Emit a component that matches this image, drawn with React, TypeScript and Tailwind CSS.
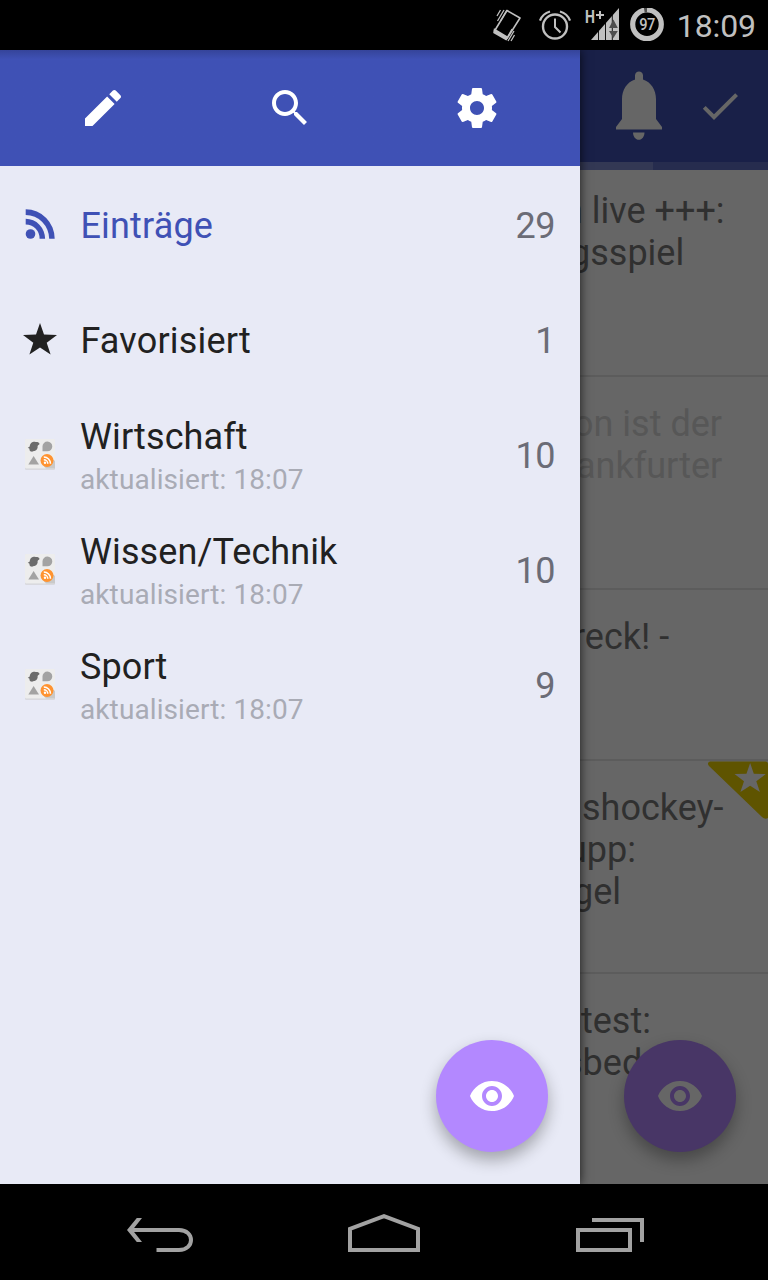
import React from "react";

const EYE =
  "M12 4.5C7 4.5 2.73 7.61 1 12c1.73 4.39 6 7.5 11 7.5s9.27-3.11 11-7.5c-1.73-4.39-6-7.5-11-7.5zM12 17c-2.76 0-5-2.24-5-5s2.24-5 5-5 5 2.24 5 5-2.24 5-5 5zm0-8c-1.66 0-3 1.34-3 3s1.34 3 3 3 3-1.34 3-3-1.34-3-3-3z";
const EDIT =
  "M3 17.25V21h3.75L17.81 9.94l-3.75-3.75L3 17.25zM20.71 7.04c.39-.39.39-1.02 0-1.41l-2.34-2.34c-.39-.39-1.02-.39-1.41 0l-1.83 1.83 3.75 3.75 1.83-1.83z";
const SEARCH =
  "M15.5 14h-.79l-.28-.27C15.41 12.59 16 11.11 16 9.5 16 5.91 13.09 3 9.5 3S3 5.91 3 9.5 5.91 16 9.5 16c1.61 0 3.09-.59 4.23-1.57l.27.28v.79l5 4.99L20.49 19l-4.99-5zm-6 0C7.01 14 5 11.99 5 9.5S7.01 5 9.5 5 14 7.01 14 9.5 11.99 14 9.5 14z";
const SETTINGS =
  "M19.43 12.98c.04-.32.07-.64.07-.98s-.03-.66-.07-.98l2.11-1.65c.19-.15.24-.42.12-.64l-2-3.46c-.12-.22-.39-.3-.61-.22l-2.49 1c-.52-.4-1.08-.73-1.69-.98l-.38-2.65C14.46 2.18 14.25 2 14 2h-4c-.25 0-.46.18-.49.42l-.38 2.65c-.61.25-1.17.59-1.69.98l-2.49-1c-.23-.09-.49 0-.61.22l-2 3.46c-.13.22-.07.49.12.64l2.11 1.65c-.04.32-.07.65-.07.98s.03.66.07.98l-2.11 1.65c-.19.15-.24.42-.12.64l2 3.46c.12.22.39.3.61.22l2.49-1c.52.4 1.08.73 1.69.98l.38 2.65c.03.24.24.42.49.42h4c.25 0 .46-.18.49-.42l.38-2.65c.61-.25 1.17-.59 1.69-.98l2.49 1c.23.09.49 0 .61-.22l2-3.46c.12-.22.07-.49-.12-.64l-2.11-1.65zM12 15.5c-1.93 0-3.5-1.57-3.5-3.5s1.57-3.5 3.5-3.5 3.5 1.57 3.5 3.5-1.57 3.5-3.5 3.5z";
const CHECK = "M9 16.17L4.83 12l-1.42 1.41L9 19 21 7l-1.41-1.41z";
const STAR =
  "M17 0 21 11.6 34 12 23.7 19.8 27.6 31.5 17 24.6 6.4 31.5 10.3 19.8 0 12 13 11.6Z";

function Icon({ d, className }: { d: string; className: string }) {
  return (
    <svg viewBox="0 0 24 24" fill="currentColor" className={className}>
      <path d={d} />
    </svg>
  );
}

function StatusBar() {
  return (
    <header className="flex h-[50px] shrink-0 items-center justify-end bg-black pr-3 text-[#c0c0c0]">
      <svg viewBox="0 0 30 36" className="mr-[17px] h-9 w-[30px]" fill="none" stroke="#c0c0c0">
        <path d="M15 3.5 28 11 15 31.5 2.5 24Z" strokeWidth="1.6" strokeLinejoin="round" />
        <path d="M2.5 22.5 15.2 30 14 32.5 2 25.5Z" fill="#c0c0c0" strokeWidth="1.5" />
        <path d="M5.5 14 12 3M8.5 14 15 3M5 9 8.5 3M16 34 22 24M19 34 22.5 28M14 33 20 22" strokeWidth="1.3" />
      </svg>
      <svg viewBox="0 0 32 34" className="mr-[14px] h-[34px] w-8" fill="none" stroke="#c0c0c0">
        <circle cx="16" cy="18.5" r="12" strokeWidth="2.4" />
        <path d="M16 10.5V19l5.5 5.5" strokeWidth="2" />
        <path d="M1 12.5C2.5 8.5 6 5 11 3.5M31 12.5C29.5 8.5 26 5 21 3.5" strokeWidth="2.2" />
      </svg>
      <div className="relative mr-[11px] h-9 w-[34px]">
        <svg viewBox="0 0 34 36" className="h-9 w-[34px]">
          <path d="M6 33 34 1V33Z" fill="#c0c0c0" />
          <path d="M13.5 20V33M20.5 12V33M27.3 5V33" stroke="#000" strokeWidth="0.9" />
          <path d="M24 21 28.4 12.5 32.8 21ZM24 24 28.4 31 32.8 24Z" fill="#4d4d4d" />
        </svg>
        <span className="absolute left-0 top-0 origin-left scale-x-[0.78] text-[18px] font-bold leading-[20px]">H</span>
        <svg viewBox="0 0 8 8" className="absolute left-[11.5px] top-[4px] h-2 w-2">
          <path d="M4 0V8M0 4H8" stroke="#c0c0c0" strokeWidth="2" />
        </svg>
      </div>
      <div className="relative mr-[13px] flex h-[34px] w-[34px] items-center justify-center">
        <svg viewBox="0 0 34 34" className="absolute inset-0 h-[34px] w-[34px]" fill="none">
          <circle cx="17" cy="16.2" r="14.3" stroke="#c0c0c0" strokeWidth="5.2" />
          <path d="M14.3 2.1A14.3 14.3 0 0 1 17 1.9" stroke="#4d4d4d" strokeWidth="5.2" />
        </svg>
        <span className="relative mt-[-2px] scale-x-[0.86] text-[17px] font-medium leading-none tracking-[-0.6px]">97</span>
      </div>
      <span className="pt-px text-[32px] leading-[50px] tracking-[-0.1px]">18:09</span>
    </header>
  );
}

function ActionCell({ d, label }: { d: string; label: string }) {
  return (
    <button aria-label={label} className="flex flex-1 items-center justify-center text-white">
      <Icon d={d} className="h-12 w-12" />
    </button>
  );
}

function RssIcon() {
  return (
    <svg viewBox="0 0 30 30" className="mb-[3px] h-[30px] w-[30px]" fill="#3f51b5">
      <circle cx="5.5" cy="25" r="4.8" />
      <path d="M.7 .3A29 29.5 0 0 1 29.7 29.8H24.2A23.5 24.1 0 0 0 .7 5.9Z" />
      <path d="M.7 9.8A19.4 20 0 0 1 20.1 29.8H14.6A13.9 14.4 0 0 0 .7 15.4Z" />
    </svg>
  );
}

function StarIcon() {
  return (
    <svg viewBox="0 0 34 32" fill="#212121" className="mb-[4px] h-8 w-[34px]">
      <path d={STAR} />
    </svg>
  );
}

function FeedIcon() {
  return (
    <svg viewBox="0 0 30 31" className="mb-[3px] h-[31px] w-[30px]">
      <rect y="0.8" width="30" height="30" rx="1" fill="#d3d4d8" />
      <rect width="30" height="29.6" rx="1" fill="#ededed" />
      <path d="M26 19 30 22V29.6H21L18 26Z" fill="#c9c9c9" />
      <path
        d="M14.3 4C13.5 3.2 12 2.7 10.5 3 8.5 2.4 5 3.5 4.8 7.2 4.3 8.2 3.5 8.2 2.8 8.3 3.3 9.3 4 9.5 4.5 9.7 4.3 10.8 4.8 12.3 6.2 12.6 8 12.8 8.5 12 9.5 12 12 11.5 13 9 12.6 7 13 6 13.8 5.8 14.3 5.5Z"
        fill="#6c6c6c"
      />
      <path d="M17.5 12.3V7.3A4.9 4.9 0 1 1 22.4 12.3Z" fill="#a3a3a3" />
      <path d="M3.3 25.5 8.6 17 14 25.5Z" fill="#a3a3a3" />
      <circle cx="22" cy="21.5" r="6.5" fill="#ff9330" />
      <circle cx="20" cy="23.7" r="1.2" fill="#fff" />
      <path d="M18.8 20.8A4 4 0 0 1 22.8 24.8M18.8 18A6.7 6.7 0 0 1 25.5 24.8" fill="none" stroke="#fff" strokeWidth="1.5" />
    </svg>
  );
}

interface RowProps {
  icon: React.ReactNode;
  title: string;
  count: string;
  updated?: string;
  active?: boolean;
}

function DrawerRow({ icon, title, count, updated, active }: RowProps) {
  return (
    <li className="flex h-[115px] items-center pr-[25px]">
      <span className="flex w-20 shrink-0 justify-center">{icon}</span>
      <div className={updated ? "flex flex-1 flex-col pt-[3px] tracking-[0.1px]" : "flex flex-1 flex-col pl-[0.4px] tracking-[0.18px]"}>
        <span className={active ? "text-[36px] leading-[44px] text-[#3f51b5]" : "text-[36px] leading-[44px] text-[#212121]"}>
          {title}
        </span>
        {updated && <span className="text-[28px] leading-[41px] text-[#a9abb5]">{updated}</span>}
      </div>
      <span className="text-[36px] leading-[44px] tracking-[-0.5px] text-[#6b6c76]">{count}</span>
    </li>
  );
}

function Drawer() {
  return (
    <aside className="relative z-10 flex w-[580px] shrink-0 flex-col bg-[#e8eaf6] shadow-[0_0_10px_rgba(0,0,0,0.75)]">
      <div className="flex h-[116px] bg-[#3f51b5] bg-linear-to-b from-[#35449a] to-[#3f51b5] to-8% px-[10px]">
        <ActionCell d={EDIT} label="Bearbeiten" />
        <ActionCell d={SEARCH} label="Suchen" />
        <ActionCell d={SETTINGS} label="Einstellungen" />
      </div>
      <ul className="pt-[2px]">
        <DrawerRow icon={<RssIcon />} title="Einträge" count="29" active />
        <DrawerRow icon={<StarIcon />} title="Favorisiert" count="1" />
        <DrawerRow icon={<FeedIcon />} title="Wirtschaft" count="10" updated="aktualisiert: 18:07" />
        <DrawerRow icon={<FeedIcon />} title="Wissen/Technik" count="10" updated="aktualisiert: 18:07" />
        <DrawerRow icon={<FeedIcon />} title="Sport" count="9" updated="aktualisiert: 18:07" />
      </ul>
      <button
        aria-label="Anzeigen"
        className="absolute bottom-8 right-8 flex h-28 w-28 items-center justify-center rounded-full bg-[#b388ff] text-white shadow-[0_8px_16px_rgba(0,0,0,0.3)]"
      >
        <Icon d={EYE} className="h-12 w-12" />
      </button>
    </aside>
  );
}

function Entry({ className, children }: { className: string; children: React.ReactNode }) {
  return (
    <li className={`relative shrink-0 whitespace-nowrap border-b-2 border-[#5c5c5c] pt-[26px] text-[36px] leading-[42px] ${className}`}>
      {children}
    </li>
  );
}

function Content() {
  return (
    <main className="relative flex min-w-0 flex-1 flex-col overflow-hidden bg-[#666666]">
      <div className="flex h-28 shrink-0 items-center bg-[#192048] text-[#666666]">
        <svg viewBox="0 0 46 70" className="ml-[35.5px] mt-[-1px] h-[70px] w-[46px]" fill="currentColor">
          <path d="M19 9V4.5C19 -1 27 -1 27 4.5V8.5C35 11 40 19 40 28V48L46 56V58.5H0V56L6 48V28C6 19 11 11 19 8.5Z" />
          <path d="M17 61.5H28.5C28.5 65.5 26 68.8 22.8 68.8S17 65.5 17 61.5Z" />
        </svg>
        <Icon d={CHECK} className="ml-[34.5px] h-12 w-12" />
      </div>
      <div className="flex h-2 shrink-0 bg-[#262c4e]">
        <div className="w-[73px] bg-[#333854]" />
      </div>
      <ul className="flex flex-1 flex-col text-[#303030]">
        <Entry className="mt-[-6px] h-[213px]">
          <div className="ml-[-17px]">n live +++:</div>
          <div className="ml-[-10px]">gsspiel</div>
        </Entry>
        <Entry className="h-[213px] text-[#575757]">
          <div className="ml-[-7px]">on ist der</div>
          <div className="ml-[-4px]">ankfurter</div>
        </Entry>
        <Entry className="h-[171px]">
          <div className="ml-[-7px]">reck! -</div>
        </Entry>
        <Entry className="h-[213px]">
          <div className="ml-[2px]">shockey-</div>
          <div className="ml-[-13px]">upp:</div>
          <div className="ml-[-7px]">gel</div>
          <svg viewBox="0 0 60 58" className="absolute right-0 top-0 h-[58px] w-[60px]">
            <path d="M2 0.5H57.5Q60 0.5 60 3V57Q57 59 54 56L1 5Q-1.5 1.5 2 0.5Z" fill="#5f5400" />
            <path transform="translate(26.5 2) scale(0.92)" d={STAR} fill="#666666" />
          </svg>
        </Entry>
        <Entry className="h-[213px]">
          <div className="ml-px">test:</div>
          <div className="ml-[-16px]">sbed</div>
        </Entry>
      </ul>
      <button
        aria-label="Anzeigen"
        className="absolute bottom-8 right-8 flex h-28 w-28 items-center justify-center rounded-full bg-[#483666] text-[#666666] shadow-[0_8px_16px_rgba(0,0,0,0.3)]"
      >
        <Icon d={EYE} className="h-12 w-12" />
      </button>
    </main>
  );
}

function NavBar() {
  return (
    <nav className="flex h-24 shrink-0 items-center justify-between bg-black pl-[126px] pr-[123px]">
      <svg viewBox="0 0 66 40" className="mt-1 h-10 w-[66px] overflow-visible" fill="none">
        <path d="M4 16H53C69 16 69 36 53 36H30.5" stroke="#a2a2a2" strokeWidth="4" />
        <path d="M1 16 10.8 4H16L6.5 16 16 28H10.8Z" fill="#a2a2a2" />
      </svg>
      <svg viewBox="0 0 72 40" className="mt-1 h-10 w-[72px]" fill="none" stroke="#a2a2a2" strokeWidth="4">
        <path d="M2 36V15L36 2.2 70 15V36Z" />
      </svg>
      <svg viewBox="0 0 69 40" className="mt-1 h-10 w-[69px]" fill="none" stroke="#a2a2a2" strokeWidth="4">
        <path d="M2 16H54V36H2ZM16 6H66V28" />
      </svg>
    </nav>
  );
}

export default function App() {
  return (
    <div className="flex h-[1280px] w-[768px] flex-col overflow-hidden bg-black font-[Roboto,sans-serif]">
      <StatusBar />
      <div className="flex min-h-0 flex-1 overflow-hidden">
        <Drawer />
        <Content />
      </div>
      <NavBar />
    </div>
  );
}
